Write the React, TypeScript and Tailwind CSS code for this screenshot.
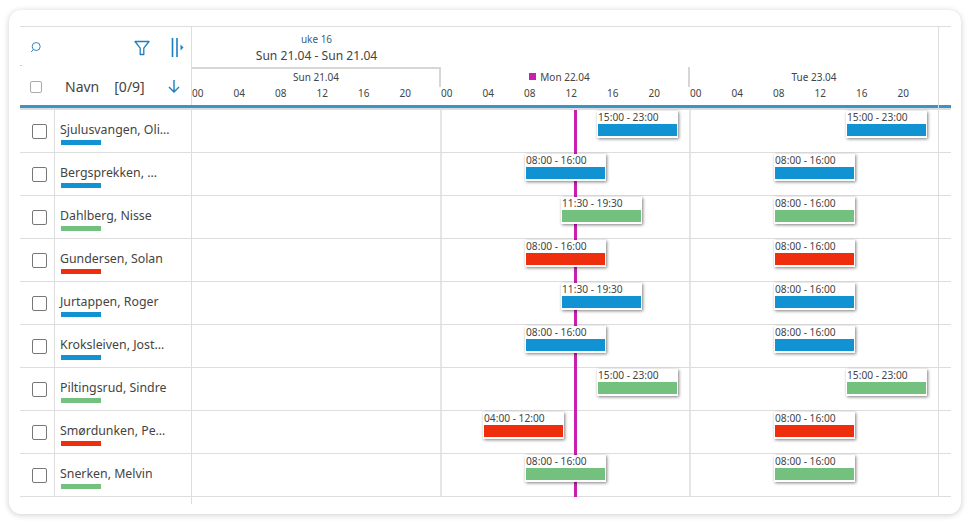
const days = [
  { label: "Sun 21.04" },
  { label: "Mon 22.04" },
  { label: "Tue 23.04" },
];
const hours = ["00", "04", "08", "12", "16", "20"];
const blue = "#1192d2";
const green = "#74c17f";
const red = "#ee2e0d";
const rows = [
  { name: "Sjulusvangen, Oli…", c: blue, s: [["15:00 - 23:00", 1, 15], ["15:00 - 23:00", 2, 15]] },
  { name: "Bergsprekken, …", c: blue, s: [["08:00 - 16:00", 1, 8], ["08:00 - 16:00", 2, 8]] },
  { name: "Dahlberg, Nisse", c: green, s: [["11:30 - 19:30", 1, 11.5], ["08:00 - 16:00", 2, 8]] },
  { name: "Gundersen, Solan", c: red, s: [["08:00 - 16:00", 1, 8], ["08:00 - 16:00", 2, 8]] },
  { name: "Jurtappen, Roger", c: blue, s: [["11:30 - 19:30", 1, 11.5], ["08:00 - 16:00", 2, 8]] },
  { name: "Kroksleiven, Jost…", c: blue, s: [["08:00 - 16:00", 1, 8], ["08:00 - 16:00", 2, 8]] },
  { name: "Piltingsrud, Sindre", c: green, s: [["15:00 - 23:00", 1, 15], ["15:00 - 23:00", 2, 15]] },
  { name: "Smørdunken, Pe…", c: red, s: [["04:00 - 12:00", 1, 4], ["08:00 - 16:00", 2, 8]] },
  { name: "Snerken, Melvin", c: green, s: [["08:00 - 16:00", 1, 8], ["08:00 - 16:00", 2, 8]] },
] as { name: string; c: string; s: [string, number, number][] }[];

function Shift({ label, day, hour, color }: { label: string; day: number; hour: number; color: string }) {
  const left = Math.floor(day * 249 + hour * 10.375 + 1);
  return (
    <div
      className="absolute top-[1px] z-10 h-[27px] w-[81px] bg-white px-px shadow-[1px_1px_3px_rgba(0,0,0,0.5)]"
      style={{ left }}
    >
      <div className="h-[13px] whitespace-nowrap text-[10.2px] leading-[13px] text-[#444]">{label}</div>
      <div className="h-[12px]" style={{ background: color }} />
    </div>
  );
}

export default function App() {
  return (
    <div className="h-[524px] w-[971px] bg-white pl-[9px] pt-[10px] font-['Noto_Sans',sans-serif] text-[#444]">
      <div className="h-[504px] w-[952px] rounded-[12px] bg-white pl-[11px] pr-[10px] pt-[16px] shadow-[0_1px_6px_rgba(0,0,0,0.2)]">
        <div className="relative w-[931px] border-t border-[#ddd]">
          {/* Header */}
          <div className="flex h-[78px]">
            <div className="flex w-[171px] shrink-0 flex-col">
              <div className="relative flex h-[39px] items-center pr-[7px]">
                <svg className="ml-[10px] mt-px" width="12" height="12" viewBox="0 0 12 12" fill="none" stroke="#2b86c5" strokeWidth="1">
                  <circle cx="6.200" cy="5.500" r="4" />
                  <path d="M3.400 8.500 1.200 11" />
                </svg>
                <svg className="ml-auto mt-[3px]" width="16" height="16" viewBox="0 0 16 16" fill="none" stroke="#1b7fc0" strokeWidth="1.300" strokeLinejoin="round">
                  <path d="M1 1.500h14L9.800 8.200v6.300H6.200V8.200z" />
                </svg>
                <svg className="ml-[21px] mt-[2px]" width="13" height="19" viewBox="0 0 13 19" fill="none">
                  <path d="M1.500 0v19M6 0v19" stroke="#1b7fc0" strokeWidth="1.600" />
                  <path d="M9.500 6.500 12.500 9.500 9.500 12.500z" fill="#1b7fc0" />
                </svg>
                <div className="absolute bottom-0 left-0 h-px w-[2px] bg-[#ccc]" />
              </div>
              <div className="flex h-[39px] items-start pt-[11px]">
                <div className="ml-[10px] mt-[4px] h-[12px] w-[12px] rounded-[2px] border border-[#aaa]" />
                <span className="ml-[23px] text-[14px] leading-[19px]">Navn</span>
                <span className="ml-[15px] text-[14px] leading-[19px]">[0/9]</span>
                <svg className="ml-[23px] mt-[2px]" width="12" height="14" viewBox="0 0 12 14" fill="none" stroke="#1b7fc0" strokeWidth="1.400">
                  <path d="M6 1v12M1 8l5 5 5-5" />
                </svg>
              </div>
            </div>
            <div className="flex w-[760px] flex-col border-l border-[#ddd]">
              <div className="flex h-[40px]">
                <div className="w-[249px] pt-[5px] text-center">
                  <div className="text-[10px] leading-[15px] text-[#3d5f80]">uke 16</div>
                  <div className="text-[12.1px] leading-[17px]">Sun 21.04 - Sun 21.04</div>
                </div>
              </div>
              <div className="flex h-[38px]">
                {days.map((d, i) => (
                  <div key={d.label} className={`relative h-full w-[249px] ${i === 0 ? "border-t-2 border-[#d6d6d6]" : "pt-[2px]"}`}>
                    <div className="relative flex h-[16px] items-center justify-center pr-px text-[10px] leading-[14px]">
                      {i === 1 && <span className="absolute left-[88px] top-[4px] h-[7px] w-[7px] bg-[#c81fb0]" />}
                      {d.label}
                    </div>
                    <div className="mt-px flex">
                      {hours.map((h) => (
                        <span key={h} className="w-[41.5px] text-[10px] leading-[14px]">{h}</span>
                      ))}
                    </div>
                    {i === 0 && <div className="absolute -top-[2px] right-0 h-[20px] w-[2px] bg-[#d6d6d6]" />}
                    {i === 1 && <div className="absolute top-0 right-0 h-[20px] w-[2px] bg-[#d6d6d6]" />}
                  </div>
                ))}
              </div>
            </div>
          </div>
          <div className="h-[3px] bg-[#3a94c4]" />
          <div className="h-[2px] bg-[#ddd]" />

          {/* Rows */}
          <div className="relative">
            {rows.map((r) => (
              <div key={r.name} className="flex h-[43px] border-b border-[#ddd]">
                <div className="flex w-[35px] shrink-0 items-center border-r border-[#ddd] pl-[12px]">
                  <div className="h-[15px] w-[15px] rounded-[2px] border border-[#777]" />
                </div>
                <div className="w-[136px] shrink-0 pl-[5px] pt-[11px]">
                  <div className="whitespace-nowrap text-[12.35px] leading-[17px]">{r.name}</div>
                  <div className="ml-px mt-[2px] h-[5px] w-[40px]" style={{ background: r.c }} />
                </div>
                <div className="relative w-[760px] border-l border-[#ddd]">
                  {r.s.map(([label, day, hour]) => (
                    <Shift key={label + day} label={label} day={day} hour={hour} color={r.c} />
                  ))}
                  <div className="absolute inset-y-0 left-[248px] w-[2px] bg-[#e6e6e6]" />
                  <div className="absolute inset-y-0 left-[497px] w-[2px] bg-[#e6e6e6]" />
                  <div className="absolute inset-y-0 left-[746px] w-px bg-[#ddd]" />
                </div>
              </div>
            ))}
            <div className="absolute inset-y-0 left-[554px] z-[5] w-[3px] bg-[#c81fb0]" />
          </div>
          <div className="ml-[171px] h-[7px] w-px bg-[#ddd]" />
          <div className="absolute -top-px left-[918px] h-[83px] w-px bg-[#ddd]" />
        </div>
      </div>
    </div>
  );
}
